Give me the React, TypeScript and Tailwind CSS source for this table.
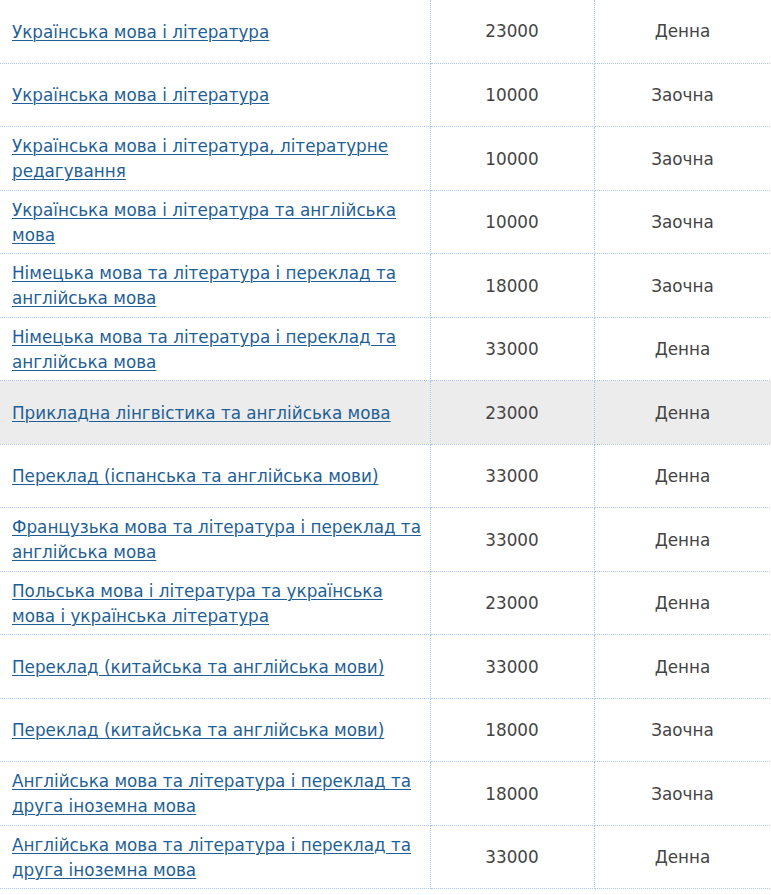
const rows: { name: string; price: string; form: string; hl?: boolean }[] = [
  { name: "Українська мова і література", price: "23000", form: "Денна" },
  { name: "Українська мова і література", price: "10000", form: "Заочна" },
  { name: "Українська мова і література, літературне редагування", price: "10000", form: "Заочна" },
  { name: "Українська мова і література та англійська мова", price: "10000", form: "Заочна" },
  { name: "Німецька мова та література і переклад та англійська мова", price: "18000", form: "Заочна" },
  { name: "Німецька мова та література і переклад та англійська мова", price: "33000", form: "Денна" },
  { name: "Прикладна лінгвістика та англійська мова", price: "23000", form: "Денна", hl: true },
  { name: "Переклад (іспанська та англійська мови)", price: "33000", form: "Денна" },
  { name: "Французька мова та література і переклад та англійська мова", price: "33000", form: "Денна" },
  { name: "Польська мова і література та українська мова і українська література", price: "23000", form: "Денна" },
  { name: "Переклад (китайська та англійська мови)", price: "33000", form: "Денна" },
  { name: "Переклад (китайська та англійська мови)", price: "18000", form: "Заочна" },
  { name: "Англійська мова та література і переклад та друга іноземна мова", price: "18000", form: "Заочна" },
  { name: "Англійська мова та література і переклад та друга іноземна мова", price: "33000", form: "Денна" },
];

export default function App() {
  return (
    <div className="w-[771px] overflow-hidden bg-white font-['DejaVu_Sans',sans-serif] text-[16.8px]">
      <table className="-mt-[0.5px] w-[771px] table-fixed border-collapse">
        <colgroup>
          <col className="w-[430px]" />
          <col className="w-[164px]" />
          <col className="w-[177px]" />
        </colgroup>
        <tbody>
          {rows.map((r, i) => (
            <tr
              key={i}
              className={r.hl ? "h-[63.5px] bg-[#ececec]" : "h-[63.5px]"}
            >
              <td className="border-b border-r border-dotted border-[#a9c7ef] pt-[2px] pb-0 pl-3 pr-2 align-middle leading-[25px]">
                <a href="#" className="text-[#1f5f96] underline decoration-1 underline-offset-2">
                  {r.name}
                </a>
              </td>
              <td className="border-b border-r border-dotted border-[#a9c7ef] pt-[2px] text-center align-middle text-[#444]">
                {r.price}
              </td>
              <td className="border-b border-r border-dotted border-[#a9c7ef] pt-[2px] text-center align-middle text-[#444]">
                {r.form}
              </td>
            </tr>
          ))}
        </tbody>
      </table>
    </div>
  );
}
